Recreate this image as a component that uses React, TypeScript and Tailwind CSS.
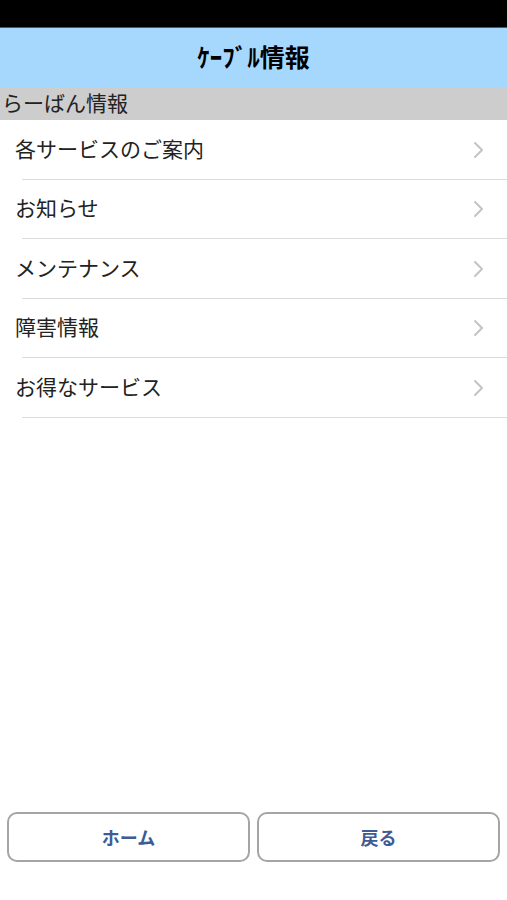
import React from 'react';

const items = ['各サービスのご案内', 'お知らせ', 'メンテナンス', '障害情報', 'お得なサービス'];

const Chevron = () => (
  <svg width="12" height="18" viewBox="0 0 12 18" fill="none">
    <path d="M2 2l7 7-7 7" stroke="#c4c4c4" strokeWidth="2" strokeLinecap="round" strokeLinejoin="round" />
  </svg>
);

export default function App() {
  return (
    <div className="w-[507px] h-[900px] bg-white flex flex-col font-['Noto_Sans_CJK_JP',sans-serif] overflow-hidden">
      {/* status bar */}
      <div className="h-[28px] bg-black border-b border-[#555]" />

      {/* title */}
      <div className="h-[60px] bg-[#a6d7fd] flex items-center justify-center pb-[3px]">
        <h1 className="text-[25px] font-bold text-black">ｹｰﾌﾞﾙ情報</h1>
      </div>

      {/* section */}
      <div className="h-[32px] bg-[#cdcdcd] flex items-center px-[2px] pb-[3px] text-[21px] text-[#222] leading-none">
        らーばん情報
      </div>

      {/* list */}
      <ul className="flex flex-col">
        {items.map((label) => (
          <li key={label} className="h-[59.5px] flex items-center pl-[15px] relative">
            <span className="flex-1 text-[21px] text-[#222] leading-none pb-[3px]">{label}</span>
            <span className="pr-[22px]"><Chevron /></span>
            <div className="absolute left-[22px] right-0 bottom-0 h-[1px] bg-[#dcdcdc]" />
          </li>
        ))}
      </ul>

      <div className="flex-1" />

      {/* buttons */}
      <div className="flex gap-[7px] px-[7px] pb-[38px]">
        <button className="flex-1 h-[50px] rounded-[10px] border-2 border-[#a5a5a5] bg-white text-[#3c5b97] text-[18px] font-bold">
          ホーム
        </button>
        <button className="flex-1 h-[50px] rounded-[10px] border-2 border-[#a5a5a5] bg-white text-[#3c5b97] text-[18px] font-bold">
          戻る
        </button>
      </div>
    </div>
  );
}
